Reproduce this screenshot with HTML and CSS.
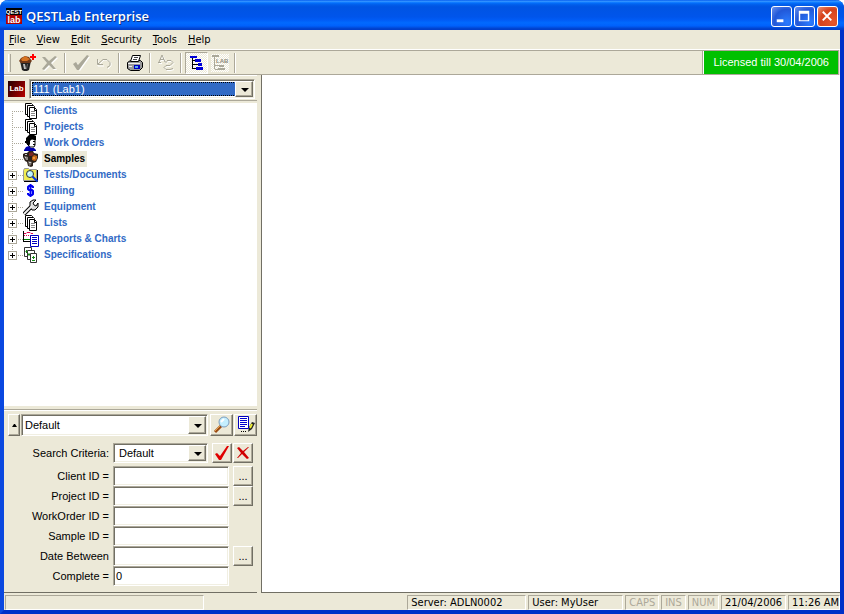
FILE: index.html
```html
<!DOCTYPE html>
<html lang="en">
<head>
<meta charset="utf-8">
<title>QESTLab Enterprise</title>
<link rel="stylesheet" href="styles.css">
</head>
<body>
<svg class="defs" aria-hidden="true">
  <symbol id="docs" viewBox="0 0 16 16">
    <g fill="#fff" stroke="#000">
      <path d="M2.500.5h6l1 1v10h-7z"/>
      <path d="M4.500 2.500h6l1 1v10h-7z"/>
      <path d="M6.500 4.500h5l2 2v9h-7z"/>
    </g>
    <path d="M11.500 5v2.500h2" fill="none" stroke="#000"/>
    <path d="M8 8.500h4M8 10.500h4M8 12.500h4" fill="none" stroke="#888"/>
  </symbol>
  <symbol id="person" viewBox="0 0 16 16">
    <path d="M5 4h7v6l-1 2H7L4 9z" fill="#fff" stroke="#000"/>
    <path d="M3 3l3-3h5l2 1v4h-2L9 4 7 6v3L6 11 3 8H2V6h1z"/>
    <path d="M10 6.500h2M10 9.500h2" stroke="#000"/>
    <path d="M1 15l2-3 3-1 2 2h3l2 2v1H1z" fill="#0000b0"/>
  </symbol>
  <symbol id="rocks" viewBox="0 0 16 16">
    <path d="M0 3l2-1h2l2-2h4l1 2 4 1v4l-2 4-3 1v3l-2 1-3-1-1-4-2-1-2-4z" fill="#2b211b"/>
    <path d="M6 2l3-1 2 2-2 2H6z" fill="#7a2824"/>
    <path d="M1 5l4 1v3H3z" fill="#8c8580"/>
    <path d="M9 6l2-2 3 1v3l-2 2-3-1z" fill="#c4661a"/>
    <path d="M10 6h2v2h-2z" fill="#f29a3a"/>
    <path d="M5 10l4 1-1 3-2 1z" fill="#77706b"/>
    <path d="M2 3.500h2M6 11.500h2M2 6.500h1" stroke="#ccc"/>
  </symbol>
  <symbol id="search-doc" viewBox="0 0 16 16">
    <path d="M.5 13.500v-10l1-2h4l1 1h7v11z" fill="#f0ec50" stroke="#999"/>
    <path d="M1 14.500h13.500V3" fill="none" stroke="#000"/>
    <circle cx="7" cy="7" r="3.500" fill="#b8f4ff" stroke="#333"/>
    <path d="M5 7l2-2" stroke="#fff"/>
    <path d="M9.500 9.500l5 5" stroke="#0838d8" stroke-width="2"/>
  </symbol>
  <symbol id="dollar" viewBox="0 0 16 16">
    <path d="M10 5V4L9 3H6L5 4v2l1 1h3l1 1v3l-1 1H6l-1-1v-1M7.500 1v13" fill="none" stroke="#0000f0" stroke-width="2"/>
  </symbol>
  <symbol id="wrench" viewBox="0 0 16 16">
    <path d="M1 15l7-7" stroke="#000" stroke-width="4"/>
    <path d="M7 8V3l3-2h3l-3 3 1 2 2 1 2-3v4l-3 3H9z" fill="#ddd" stroke="#000"/>
    <path d="M1 15l8-8" stroke="#eee" stroke-width="2"/>
  </symbol>
  <symbol id="chart" viewBox="0 0 16 16">
    <path d="M.5 0v11M0 10.500h7" stroke="#000"/>
    <path d="M1 2.500h2l1-1h3l1 1h2" fill="none" stroke="#e0004d"/>
    <path d="M1 4.500h9" stroke="#e0004d" stroke-dasharray="1 1"/>
    <path d="M1 8.500h6" stroke="#008000"/>
    <path d="M7.500 4.500h8v11h-8z" fill="#fff" stroke="#0000c0"/>
    <path d="M9 6.500h5M9 8.500h5M9 10.500h5M9 12.500h5" stroke="#0000c0"/>
  </symbol>
  <symbol id="specs" viewBox="0 0 16 16">
    <g fill="#fff" stroke="#333">
      <path d="M1.500.5h7v9h-7z"/>
      <path d="M4.500 3.500h7v9h-7z"/>
      <path d="M7.500 6.500h6v9h-6z"/>
    </g>
    <path d="M2.500 4.500h2M3.500 3v3M5 7.500h2M6 6v3M9 10.500h3M10.500 9v3M9 13.500h3" stroke="#168a16"/>
  </symbol>
</svg>

<div class="window">
  <header class="titlebar">
    <svg class="logo" viewBox="0 0 16 16" aria-hidden="true">
      <rect width="16" height="7" fill="#000"/>
      <rect y="7" width="16" height="9" fill="#b00000"/>
      <text class="logo-top" x="8" y="6" text-anchor="middle">QEST</text>
      <text class="logo-low" x="8" y="15" text-anchor="middle">lab</text>
    </svg>
    <h1>QESTLab Enterprise</h1>
    <div class="caption-buttons">
      <button class="caption" aria-label="Minimize"><svg viewBox="0 0 20 20"><path d="M5 13h7v3H5z" fill="#fff"/></svg></button>
      <button class="caption" aria-label="Maximize"><svg viewBox="0 0 20 20"><path d="M4 4h11v11H4zM5.500 7v7h8V7z" fill="#fff" fill-rule="evenodd"/></svg></button>
      <button class="caption close" aria-label="Close"><svg viewBox="0 0 20 20"><path d="M5 5l9 9M14 5l-9 9" stroke="#fff" stroke-width="2"/></svg></button>
    </div>
  </header>

  <nav class="menubar" aria-label="Main menu">
    <button><u>F</u>ile</button>
    <button><u>V</u>iew</button>
    <button><u>E</u>dit</button>
    <button><u>S</u>ecurity</button>
    <button><u>T</u>ools</button>
    <button><u>H</u>elp</button>
  </nav>

  <div class="toolbar">
    <span class="grip"></span>
    <button class="tool" aria-label="New sample">
      <svg viewBox="0 0 18 18"><path d="M2 7h11l-2 9-2 1H6l-2-1z" fill="#222"/><path d="M5 10l1 5h2l-1-5z" fill="#bbb"/><path d="M9 10h1l-1 5H8z" fill="#666"/><path d="M1 7l2-3 4-2 4 1 3 4-2 2H3z" fill="#713817"/><path d="M3 5l4-3 5 3-3 2H4z" fill="#d67422"/><path d="M15 0v6M12 3h6" stroke="#f00" stroke-width="2"/></svg>
    </button>
    <button class="tool" aria-label="Delete" disabled>
      <svg viewBox="0 0 18 18"><path id="cross" d="M1 3h3l4 4 6-5 2 1-6 6 5 6h-3L8 11l-5 5-2-1 5-6z" fill="#fff" transform="translate(1 1)"/><path d="M1 3h3l4 4 6-5 2 1-6 6 5 6h-3L8 11l-5 5-2-1 5-6z" fill="#aaa899"/></svg>
    </button>
    <span class="sep"></span>
    <button class="tool" aria-label="Apply" disabled>
      <svg viewBox="0 0 18 18"><path d="M2 11l3-2 2 3 8-10 3 1L8 17z" fill="#fff"/><path d="M1 10l3-2 2 3 9-10 2 1L7 16H5z" fill="#aaa899"/></svg>
    </button>
    <button class="tool" aria-label="Undo" disabled>
      <svg viewBox="0 0 18 18"><path d="M3 6v6h6M4 11l5-5h4l3 3v3l-3 3" stroke="#fff" fill="none"/><path d="M2.500 5v5.500H8M3 10l5-4.500h4l3 3v3l-3 2" stroke="#aaa899" fill="none"/></svg>
    </button>
    <span class="sep"></span>
    <button class="tool" aria-label="Print">
      <svg viewBox="0 0 18 18"><path d="M1.500 8.500l3-2h10l2 2v5l-3 3h-9l-3-2z" fill="#999" stroke="#000"/><path d="M4.500 7.500l2-6h8l-2 6z" fill="#fff" stroke="#000"/><path d="M8 3.500h4M7 5.500h4" stroke="#444"/><path d="M2 9.500h12M3 12.500h3" stroke="#eee"/><path d="M8 11h6v4H8z" fill="#0000c0"/><path d="M9 12h3v2H9z" fill="#5ae"/></svg>
    </button>
    <span class="sep"></span>
    <button class="tool" aria-label="Spelling" disabled>
      <svg viewBox="0 0 18 18"><path d="M1 8.500h3M2 8l3-7 3 7h2M3 5.500h4M10 6.500h4l2 2-3 3H9l-2 2 2 2h4l3-1" fill="none" stroke="#fff" transform="translate(1 1)"/><path d="M1 8.500h3M2 8l3-7 3 7h2M3 5.500h4M10 6.500h4l2 2-3 3H9l-2 2 2 2h4l3-1" fill="none" stroke="#aaa899"/></svg>
    </button>
    <span class="sep"></span>
    <button class="tool pressed" aria-label="Tree view" aria-pressed="true">
      <svg viewBox="0 0 18 18"><path d="M4.500 3v12M5 6.500h3M5 10.500h5M5 14.500h5" fill="none" stroke="#000"/><path d="M2 2h7v2H2zM7 5h6v3H7zM10 9h4v3h-4zM8 13h7v3H8z" fill="#0000d8"/></svg>
    </button>
    <button class="tool checkered" aria-label="Lab tree" disabled>
      <svg viewBox="0 0 18 18"><path d="M1 1h7v2H1zM8 11h5v2H8zM7 14h7v2H7z" fill="#aaa899"/><path d="M3.500 3v12M4 11.500h4M4 15.500h4" stroke="#aaa899"/><text class="lab-mini" x="5" y="9">LAB</text></svg>
    </button>
    <span class="sep"></span>
    <div class="licence">Licensed till 30/04/2006</div>
  </div>

  <div class="workspace">
    <aside class="sidebar">
      <div class="lab-row">
        <span class="lab-badge" aria-hidden="true">Lab</span>
        <span class="combo highlighted">
          <select aria-label="Lab"><option>111 (Lab1)</option></select>
        </span>
      </div>

      <ul class="tree">
        <li><span class="node"></span><svg><use href="#docs"/></svg><a href="#">Clients</a></li>
        <li><span class="node"></span><svg><use href="#docs"/></svg><a href="#">Projects</a></li>
        <li><span class="node"></span><svg><use href="#person"/></svg><a href="#">Work Orders</a></li>
        <li><span class="node"></span><svg><use href="#rocks"/></svg><a href="#" class="selected">Samples</a></li>
        <li><span class="node"><button class="expand" aria-label="Expand Tests/Documents"></button></span><svg><use href="#search-doc"/></svg><a href="#">Tests/Documents</a></li>
        <li><span class="node"><button class="expand" aria-label="Expand Billing"></button></span><svg><use href="#dollar"/></svg><a href="#">Billing</a></li>
        <li><span class="node"><button class="expand" aria-label="Expand Equipment"></button></span><svg><use href="#wrench"/></svg><a href="#">Equipment</a></li>
        <li><span class="node"><button class="expand" aria-label="Expand Lists"></button></span><svg><use href="#docs"/></svg><a href="#">Lists</a></li>
        <li><span class="node"><button class="expand" aria-label="Expand Reports &amp; Charts"></button></span><svg><use href="#chart"/></svg><a href="#">Reports &amp; Charts</a></li>
        <li><span class="node"><button class="expand" aria-label="Expand Specifications"></button></span><svg><use href="#specs"/></svg><a href="#">Specifications</a></li>
      </ul>

      <form class="search">
        <div class="search-top">
          <button type="button" class="btn collapse" aria-label="Collapse"><svg viewBox="0 0 5 3"><path d="M0 3h5L3 0H2z"/></svg></button>
          <span class="combo"><select aria-label="Saved search"><option>Default</option></select></span>
          <button type="button" class="btn square" aria-label="Find">
            <svg viewBox="0 0 18 18"><path d="M2 16l6-6" stroke="#9b4b14" stroke-width="3"/><path d="M2 15l5-5" stroke="#e7a04c"/><circle cx="11" cy="6" r="5" fill="#c4efff" stroke="#7c9dbd"/><path d="M8 6l3-3" stroke="#fff" stroke-width="2"/></svg>
          </button>
          <button type="button" class="btn square" aria-label="Edit search">
            <svg viewBox="0 0 18 18"><path d="M1.500.5h10v12h-10z" fill="#fff" stroke="#0000c0"/><path d="M3 2.500h7M3 4.500h7M3 6.500h7M3 8.500h7M3 10.500h5" stroke="#0000d0"/><path d="M11 16l1-5 3-5 3 1-3 6z" fill="#222"/><path d="M13 12l2-4" stroke="#ee3" stroke-width="2"/><path d="M4 15.500h1M6 15.500h1M8 15.500h1" stroke="#000"/></svg>
          </button>
        </div>

        <div class="fields">
          <label for="criteria">Search Criteria:</label>
          <span class="combo"><select id="criteria"><option>Default</option></select></span>
          <span class="actions">
            <button type="button" class="btn small" aria-label="Accept"><svg viewBox="0 0 16 16"><path d="M1 9l2-1 3 3 7-10h2L7 15H5z" fill="#e00000"/></svg></button>
            <button type="button" class="btn small" aria-label="Clear"><svg viewBox="0 0 16 16"><path d="M2 3l2-1 4 4 5-4h1l-5 5 5 6-2 1-5-5-4 4H2l4-5z" fill="#d00000"/></svg></button>
          </span>
        </div>
        <div class="fields">
          <label for="client">Client ID =</label><input id="client" type="text"><button type="button" class="btn small" aria-label="Browse clients">...</button>
          <label for="project">Project ID =</label><input id="project" type="text"><button type="button" class="btn small" aria-label="Browse projects">...</button>
          <label for="order">WorkOrder ID =</label><input id="order" type="text"><span></span>
          <label for="sample">Sample ID =</label><input id="sample" type="text"><span></span>
          <label for="date">Date Between</label><input id="date" type="text"><button type="button" class="btn small" aria-label="Pick dates">...</button>
          <label for="complete">Complete =</label><input id="complete" type="text" value="0"><span></span>
        </div>
      </form>
    </aside>
    <main class="content"></main>
  </div>

  <footer class="statusbar">
    <span class="cell message"></span>
    <span class="cell server">Server: ADLN0002</span>
    <span class="cell user">User: MyUser</span>
    <span class="cell off">CAPS</span>
    <span class="cell off">INS</span>
    <span class="cell off">NUM</span>
    <span class="cell">21/04/2006</span>
    <span class="cell time">11:26 AM</span>
  </footer>
</div>
</body>
</html>
```
FILE: styles.css
```css
:root {
  --face: #ece9d8;
  --shadow: #aca899;
  --dark: #716f64;
  --link: #316ac5;
}

* { box-sizing: border-box; }

body {
  margin: 0;
  background: #fff;
  color: #000;
  font: 11px/14px "Liberation Sans", Arial, sans-serif;
}

button, input, select { font: inherit; color: inherit; }
button { padding: 0; border: 0; background: none; }
svg { display: block; flex: none; }
.defs { display: none; }

.window {
  display: flex;
  flex-direction: column;
  min-height: 100vh;
  border: solid #0037d8;
  border-width: 0 4px 4px;
  border-color: #0037d8 #0030c8 #0030c8 #0a48e0;
  border-radius: 8px 8px 0 0;
  background: var(--face);
}

/* Title bar */
.titlebar {
  display: flex;
  align-items: center;
  height: 30px;
  margin: 0 -4px;
  padding: 2px 6px 0;
  border-radius: 8px 8px 0 0;
  background: linear-gradient(#0058ee 0, #3593ff 4%, #288eff 6%, #127dff 8%, #036ffc 10%, #0262ee 14%, #0057e5 20%, #0054e3 24%, #0055eb 56%, #005bf5 66%, #026afe 76%, #0061fc 86%, #0144d0 95%, #003cc8 100%);
}
.logo { width: 16px; height: 16px; }
.logo-top { font: bold 6px "Liberation Sans", sans-serif; fill: #fff; }
.logo-low { font: bold 9px "Liberation Sans", sans-serif; fill: #fff; }
.titlebar h1 {
  flex: 1;
  margin: 0 0 0 4px;
  color: #fff;
  font: 600 13px/20px "Open Sans", "Noto Sans", sans-serif;
  text-shadow: 1px 1px #0a318c;
}
.caption-buttons { display: flex; gap: 2px; }
.caption {
  width: 21px;
  height: 21px;
  border: 1px solid #fff;
  border-radius: 3px;
  background: radial-gradient(circle at 80% 80%, #2a7bff, #2258d8 60%, #6d93ee);
}
.caption svg { width: 19px; height: 19px; }
.caption.close { background: radial-gradient(circle at 80% 80%, #e8562a, #d6431c 60%, #ee9478); }

/* Menu */
.menubar {
  display: flex;
  gap: 11px;
  height: 20px;
  padding: 0 5px;
  border-bottom: 1px solid #fff;
  font: 11px/18px "DejaVu Sans Condensed", "DejaVu Sans", sans-serif;
}

/* Toolbar */
.toolbar {
  display: flex;
  align-items: center;
  height: 25px;
  margin-right: 1px;
  border: solid var(--shadow);
  border-width: 1px 1px 1px 0;
}
.grip {
  width: 3px;
  height: 18px;
  margin: 0 4px;
  border-right: 1px solid var(--shadow);
  border-left: 1px solid #fff;
}
.tool {
  display: grid;
  place-items: center;
  width: 23px;
  height: 22px;
}
.tool svg { width: 18px; height: 18px; }
.pressed {
  border: 1px solid;
  border-color: var(--shadow) #fff #fff var(--shadow);
}
.pressed, .checkered svg {
  background: repeating-conic-gradient(#fff 0 25%, var(--face) 0 50%) 0 0 / 2px 2px;
}
.lab-mini { font: bold 6px "Liberation Sans", sans-serif; fill: #8f8c7e; }
.sep {
  width: 2px;
  height: 20px;
  margin: 0 3px;
  border-left: 1px solid var(--shadow);
  border-right: 1px solid #fff;
}
.licence {
  align-self: stretch;
  margin-left: auto;
  padding: 0 9px;
  border-left: 1px solid #fff;
  outline: 1px solid var(--shadow);
  background: #00c000;
  color: #fff;
  line-height: 23px;
}

/* Workspace */
.workspace { display: grid; flex: 1; grid-template-columns: 257px 1fr; }
.sidebar { display: flex; flex-direction: column; padding-right: 4px; }
.content {
  border: solid var(--dark);
  border-width: 0 0 1px 1px;
  background: #fff;
}

.lab-row {
  display: flex;
  align-items: center;
  gap: 4px;
  height: 26px;
  padding: 1px 2px 0 4px;
  border-top: 1px solid #fff;
  border-bottom: 1px solid var(--shadow);
}
.lab-badge {
  width: 17px;
  background: linear-gradient(120deg, #200, #b80000);
  color: #fff;
  font: bold 8px/16px "Liberation Sans", sans-serif;
  text-align: center;
}

/* Sunken and raised controls */
.combo, input {
  border: 1px solid;
  border-color: var(--shadow) #fff #fff var(--shadow);
  box-shadow: inset 1px 1px var(--dark), inset -1px -1px #f1efe2;
  background: #fff;
}
.combo {
  position: relative;
  display: flex;
  flex: 1;
  padding: 1px;
}
.combo select {
  flex: 1;
  min-width: 0;
  padding: 0 20px 0 2px;
  border: 0;
  outline: 0;
  background: transparent;
  appearance: none;
}
.combo::before {
  position: absolute;
  inset: 1px 1px 1px auto;
  width: 16px;
  border: 1px solid;
  border-color: #fff var(--dark) var(--dark) #fff;
  box-shadow: inset -1px -1px var(--shadow);
  background: var(--face);
  content: "";
  pointer-events: none;
}
.combo::after {
  position: absolute;
  top: calc(50% - 1px);
  right: 5px;
  border: solid transparent;
  border-width: 4px 4px 0;
  border-top-color: #000;
  content: "";
  pointer-events: none;
}
.highlighted { height: 20px; }
.highlighted select {
  margin: 1px 17px 1px 1px;
  padding: 0 0 0 1px;
  background: var(--link);
  color: #fff;
  outline: 1px dotted #000;
  outline-offset: -1px;
}

.btn {
  display: grid;
  place-items: center;
  border: 1px solid;
  border-color: #fff var(--dark) var(--dark) #fff;
  box-shadow: inset -1px -1px var(--shadow);
  background: var(--face);
}

/* Tree */
.tree {
  flex: 1;
  margin: 2px 0 0;
  padding: 0 4px;
  background: #fff;
  list-style: none;
}
.tree li {
  display: flex;
  align-items: center;
  height: 16px;
}
.tree svg { width: 16px; height: 16px; }
.tree a {
  margin-left: 3px;
  padding: 0 2px;
  color: var(--link);
  font: bold 10px/16px "Liberation Sans", Arial, sans-serif;
  text-decoration: none;
}
.tree .selected { background: var(--face); color: #000; }
.node {
  display: flex;
  align-items: center;
  align-self: stretch;
  width: 15px;
  background:
    repeating-linear-gradient(#aca899 0 1px, transparent 1px 2px) 4px 0 / 1px 100% no-repeat,
    repeating-linear-gradient(90deg, #aca899 0 1px, transparent 1px 2px) 4px 8px / 11px 1px no-repeat;
}
.tree li:first-child .node { background-position: 4px 8px; }
.tree li:last-child .node { background-size: 1px 8px, 11px 1px; }
.expand {
  width: 9px;
  height: 9px;
  border: 1px solid var(--shadow);
  background:
    linear-gradient(#000, #000) center / 5px 1px no-repeat,
    linear-gradient(#000, #000) center / 1px 5px no-repeat,
    #fff;
}

/* Search form */
.search {
  display: flex;
  flex-direction: column;
  gap: 3px;
  margin-top: 3px;
  padding-bottom: 6px;
  border-top: 1px solid var(--shadow);
  border-bottom: 1px solid var(--dark);
  box-shadow: inset 0 1px #fff;
}
.search-top {
  display: flex;
  gap: 1px;
  margin-bottom: 4px;
  padding: 4px 0 0 4px;
}
.search-top .btn { height: 22px; }
.search-top .combo { margin-right: 1px; }
.search-top .collapse { width: 12px; }
.collapse svg { width: 5px; height: 3px; }
.square { width: 23px; }
.square svg { width: 18px; height: 18px; }
.fields {
  display: grid;
  grid-template-columns: 105px 116px 20px;
  grid-auto-rows: 20px;
  column-gap: 4px;
}
.fields label { line-height: 20px; text-align: right; }
.fields .combo { grid-column: 2; margin-right: 21px; }
.fields .combo select { padding-left: 4px; }
.actions {
  display: flex;
  gap: 1px;
  justify-content: flex-end;
}
.small {
  flex: none;
  width: 20px;
  height: 20px;
}
.small svg { width: 16px; height: 16px; }
input { min-width: 0; padding: 0 2px; outline: 0; }

/* Status bar */
.statusbar {
  display: flex;
  gap: 2px;
  padding: 2px 0 0 1px;
  font: 11px/14px "DejaVu Sans Condensed", "DejaVu Sans", sans-serif;
}
.cell {
  height: 15px;
  padding: 0 3px;
  border: 1px solid;
  border-color: var(--shadow) #fff #fff var(--shadow);
  white-space: nowrap;
}
.message { width: 199px; margin-right: auto; }
.server { width: 119px; }
.user { width: 95px; }
.off { color: var(--shadow); }
.time { padding-right: 0; }
```
